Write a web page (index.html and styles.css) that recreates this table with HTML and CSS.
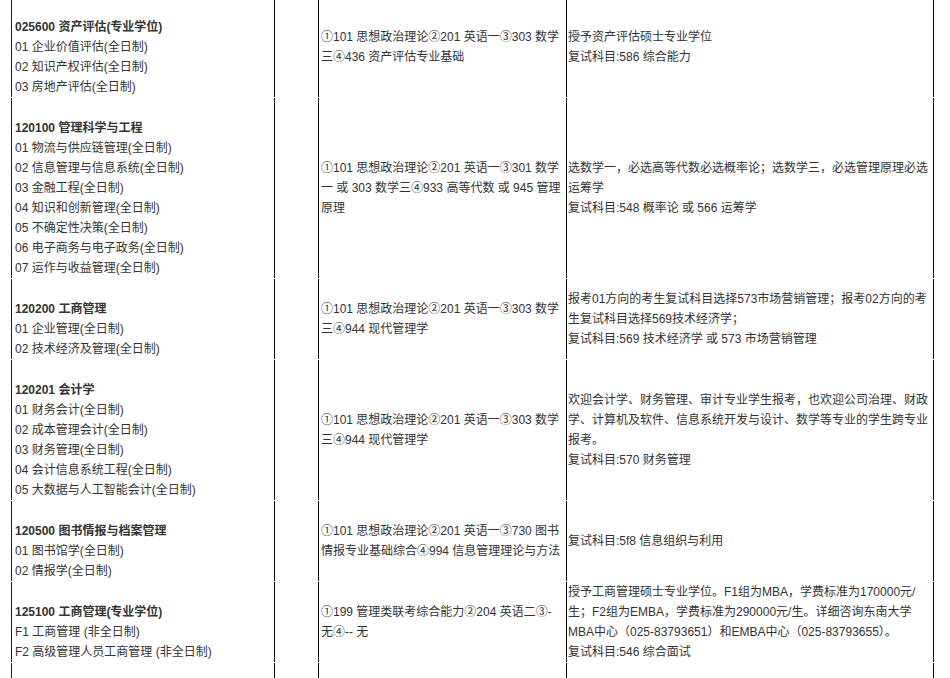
FILE: index.html
```html
<!DOCTYPE html>
<html lang="zh-CN">
<head>
<meta charset="utf-8">
<title>招生专业目录</title>
<link rel="stylesheet" href="styles.css">
</head>
<body>
<table class="catalog">
  <colgroup>
    <col class="c-major">
    <col class="c-num">
    <col class="c-exam">
    <col class="c-note">
  </colgroup>
  <tbody>
    <tr>
      <td class="major"><br><b>025600 资产评估(专业学位)</b><br>01 企业价值评估(全日制)<br>02 知识产权评估(全日制)<br>03 房地产评估(全日制)</td>
      <td class="num"></td>
      <td class="exam">①101 思想政治理论②201 英语一③303 数学三④436 资产评估专业基础</td>
      <td class="note">授予资产评估硕士专业学位<br>复试科目:586 综合能力</td>
    </tr>
    <tr>
      <td class="major"><br><b>120100 管理科学与工程</b><br>01 物流与供应链管理(全日制)<br>02 信息管理与信息系统(全日制)<br>03 金融工程(全日制)<br>04 知识和创新管理(全日制)<br>05 不确定性决策(全日制)<br>06 电子商务与电子政务(全日制)<br>07 运作与收益管理(全日制)</td>
      <td class="num"></td>
      <td class="exam">①101 思想政治理论②201 英语一③301 数学一 或 303 数学三④933 高等代数 或 945 管理原理</td>
      <td class="note">选数学一，必选高等代数必选概率论；选数学三，必选管理原理必选运筹学<br>复试科目:548 概率论 或 566 运筹学</td>
    </tr>
    <tr>
      <td class="major"><br><b>120200 工商管理</b><br>01 企业管理(全日制)<br>02 技术经济及管理(全日制)</td>
      <td class="num"></td>
      <td class="exam">①101 思想政治理论②201 英语一③303 数学三④944 现代管理学</td>
      <td class="note">报考01方向的考生复试科目选择573市场营销管理；报考02方向的考生复试科目选择569技术经济学；<br>复试科目:569 技术经济学 或 573 市场营销管理</td>
    </tr>
    <tr>
      <td class="major"><br><b>120201 会计学</b><br>01 财务会计(全日制)<br>02 成本管理会计(全日制)<br>03 财务管理(全日制)<br>04 会计信息系统工程(全日制)<br>05 大数据与人工智能会计(全日制)</td>
      <td class="num"></td>
      <td class="exam">①101 思想政治理论②201 英语一③303 数学三④944 现代管理学</td>
      <td class="note">欢迎会计学、财务管理、审计专业学生报考，也欢迎公司治理、财政学、计算机及软件、信息系统开发与设计、数学等专业的学生跨专业报考。<br>复试科目:570 财务管理</td>
    </tr>
    <tr>
      <td class="major"><br><b>120500 图书情报与档案管理</b><br>01 图书馆学(全日制)<br>02 情报学(全日制)</td>
      <td class="num"></td>
      <td class="exam">①101 思想政治理论②201 英语一③730 图书情报专业基础综合④994 信息管理理论与方法</td>
      <td class="note">复试科目:5f8 信息组织与利用</td>
    </tr>
    <tr>
      <td class="major"><br><b>125100 工商管理(专业学位)</b><br>F1 工商管理 (非全日制)<br>F2 高级管理人员工商管理 (非全日制)</td>
      <td class="num"></td>
      <td class="exam">①199 管理类联考综合能力②204 英语二③-无④-- 无</td>
      <td class="note">授予工商管理硕士专业学位。F1组为MBA，学费标准为170000元/生；F2组为EMBA，学费标准为290000元/生。详细咨询东南大学MBA中心（025-83793651）和EMBA中心（025-83793655）。<br>复试科目:546 综合面试</td>
    </tr>
    <tr>
      <td class="major"><br><b>125300 会计(专业学位)</b><br>01 会计(全日制)</td>
      <td class="num"></td>
      <td class="exam"></td>
      <td class="note"></td>
    </tr>
  </tbody>
</table>
</body>
</html>
```

FILE: styles.css
```css
html, body {
  margin: 0;
  padding: 0;
  background: #ffffff;
}

body {
  font-family: "Liberation Sans", "Noto Sans CJK SC", sans-serif;
  font-size: 12px;
  line-height: 20px;
  color: #333333;
  overflow: hidden;
}

.catalog {
  border-collapse: separate;
  border-spacing: 0 1px;
  table-layout: fixed;
  width: 923px;
  margin: -4px 0 0 11px;
}

.c-major { width: 263px; }
.c-num { width: 44px; }
.c-exam { width: 248px; }
.c-note { width: 368px; }

.catalog td {
  border-left: 1px solid #000000;
  padding: 0;
  vertical-align: middle;
}

.catalog td.major {
  border-left-color: #0000ff;
  padding-left: 3px;
}

.catalog td.exam {
  padding-left: 2px;
  padding-right: 4px;
}

.catalog td.note {
  border-right: 1px solid #000000;
  padding-left: 1px;
  padding-right: 2px;
}

.catalog b {
  font-weight: bold;
}
```
